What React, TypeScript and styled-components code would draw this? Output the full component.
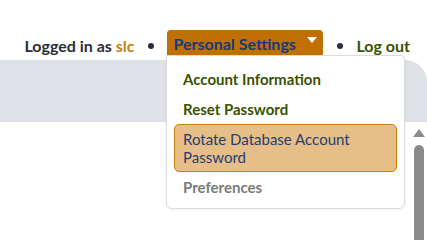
import React from "react";
import styled, { createGlobalStyle } from "styled-components";

const Global = createGlobalStyle`
  html, body { margin: 0; padding: 0; background: #ffffff; }
  body { font-family: "Lato", "Open Sans", sans-serif; overflow: hidden; }
`;

const Page = styled.div`
  position: relative;
  width: 427px;
  height: 240px;
  display: flex;
  flex-direction: column;
  overflow: hidden;
`;

const Header = styled.div`
  height: 60px;
  box-sizing: border-box;
  padding: 30px 17px 0 0;
  display: flex;
  justify-content: flex-end;
  align-items: flex-start;
  font-size: 16px;
  font-weight: 700;
`;

const HeaderItem = styled.div<{ $color?: string }>`
  height: 25px;
  line-height: 25px;
  padding-top: 3px;
  box-sizing: border-box;
  color: ${(p) => p.$color || "#2b2d38"};
  white-space: nowrap;
`;

const User = styled.span`
  color: #c8800f;
`;

const Bullet = styled.div`
  width: 6px;
  height: 6px;
  border-radius: 50%;
  background: #2b2d38;
  margin: 13px 13px 0 14px;
`;

const SettingsButton = styled.div`
  position: relative;
  width: 156px;
  height: 25px;
  box-sizing: border-box;
  padding: 3px 6px 0 6px;
  line-height: 22px;
  background: #c07000;
  border-radius: 4px 4px 0 0;
  color: #163b7c;
  display: flex;
  align-items: flex-start;
  justify-content: space-between;
  white-space: nowrap;
`;

const Caret = styled.svg`
  margin-top: 4px;
  margin-right: 0px;
`;

const Band = styled.div`
  height: 62px;
  background: #dee1e5;
  border-top-right-radius: 22px;
`;

const Content = styled.div`
  flex: 1;
  display: flex;
  justify-content: flex-end;
  padding-right: 2px;
`;

const ScrollBar = styled.div`
  width: 12px;
  display: flex;
  flex-direction: column;
  align-items: center;
  padding-top: 6px;
`;

const ThumbArrow = styled.svg`
  display: block;
`;

const Thumb = styled.div`
  margin-top: 8px;
  width: 10px;
  flex: 1;
  background: #8a8a8a;
  border-radius: 5px 5px 0 0;
`;

const Dropdown = styled.div`
  position: absolute;
  left: 166px;
  top: 55px;
  width: 239px;
  box-sizing: border-box;
  padding: 8px 7px 6px 7px;
  background: #ffffff;
  border: 1px solid #dcdcdc;
  border-radius: 0 4px 6px 6px;
  box-shadow: 0 1px 3px rgba(0, 0, 0, 0.06);
  display: flex;
  flex-direction: column;
`;

const MenuItem = styled.div<{ $active?: boolean; $color?: string }>`
  padding: 5px 8px;
  border: 1px solid ${(p) => (p.$active ? "#c8800f" : "transparent")};
  border-radius: 5px;
  background: ${(p) => (p.$active ? "#e8be88" : "transparent")};
  color: ${(p) => (p.$active ? "#1d3f73" : p.$color || "#3a5200")};
  font-size: 15px;
  font-weight: ${(p) => (p.$active ? 400 : 700)};
  line-height: 18px;
`;

export default function App() {
  return (
    <>
      <Global />
      <Page>
        <Header>
          <HeaderItem>
            Logged in as <User>slc</User>
          </HeaderItem>
          <Bullet />
          <SettingsButton>
            <span>Personal Settings</span>
            <Caret width="10" height="6" viewBox="0 0 10 6">
              <polygon points="0,0 10,0 5,6" fill="#ffffff" />
            </Caret>
          </SettingsButton>
          <Bullet />
          <HeaderItem $color="#3a5200">Log out</HeaderItem>
        </Header>
        <Band />
        <Content>
          <ScrollBar>
            <ThumbArrow width="12" height="9" viewBox="0 0 12 9">
              <polygon points="0,9 12,9 6,1" fill="#8a8a8a" />
            </ThumbArrow>
            <Thumb />
          </ScrollBar>
        </Content>
        <Dropdown>
          <MenuItem>Account Information</MenuItem>
          <MenuItem>Reset Password</MenuItem>
          <MenuItem $active>Rotate Database Account Password</MenuItem>
          <MenuItem $color="#7a7a7a">Preferences</MenuItem>
        </Dropdown>
      </Page>
    </>
  );
}
